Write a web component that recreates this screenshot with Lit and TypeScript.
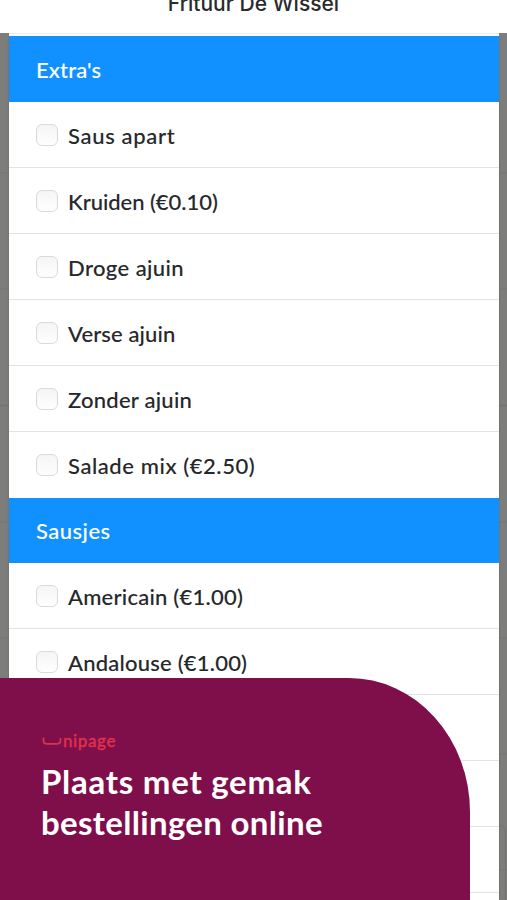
import { LitElement, html, css } from "lit";
import { customElement, property } from "lit/decorators.js";

interface Option { label: string; spacing: number }
interface Group { title: string; spacing: number; height: number; options: Option[] }

const groups: Group[] = [
  {
    title: "Extra's", spacing: 0.13, height: 66,
    options: [
      { label: "Saus apart", spacing: 0.68 },
      { label: "Kruiden (€0.10)", spacing: -0.04 },
      { label: "Droge ajuin", spacing: 0.42 },
      { label: "Verse ajuin", spacing: 0.12 },
      { label: "Zonder ajuin", spacing: 0.25 },
      { label: "Salade mix (€2.50)", spacing: 0.58 },
    ],
  },
  {
    title: "Sausjes", spacing: 0.48, height: 65,
    options: [
      { label: "Americain (€1.00)", spacing: 0.24 },
      { label: "Andalouse (€1.00)", spacing: 0.22 },
      { label: "", spacing: 0 },
      { label: "", spacing: 0 },
      { label: "", spacing: 0 },
      { label: "", spacing: 0 },
    ],
  },
];

@customElement("option-group")
class OptionGroup extends LitElement {
  @property({ attribute: false }) group!: Group;

  static styles = css`
    :host { display: block; }
    .head {
      box-sizing: border-box; padding: 1px 27px 0;
      display: flex; align-items: center;
      background: #1190ff; color: #fff; font-size: 22px; line-height: 26px; font-weight: 500;
      -webkit-text-stroke: 0.1px #fff;
    }
    .row {
      height: 66px; box-sizing: border-box; padding: 0 27px;
      display: flex; align-items: center; gap: 10px;
      border-bottom: 1px solid #e2e3e4; background: #fff;
    }
    .row:last-child { border-bottom-color: #fff; }
    .box {
      width: 22px; height: 22px; box-sizing: border-box; flex: none;
      border: 1.5px solid #d9dadb; border-radius: 6px;
      background: linear-gradient(#f5f5f5, #fefefe);
    }
    .label {
      font-size: 22px; line-height: 26px; font-weight: 500; color: #25282b;
      -webkit-text-stroke: 0.1px #25282b; white-space: nowrap; padding-top: 3px;
    }
  `;

  render() {
    return html`
      <div class="head" style="height:${this.group.height}px">
        <span style="letter-spacing:${this.group.spacing}px">${this.group.title}</span>
      </div>
      ${this.group.options.map((o) => html`
        <div class="row">
          <span class="box"></span>
          <span class="label" style="letter-spacing:${o.spacing}px">${o.label}</span>
        </div>`)}
    `;
  }
}

@customElement("app-root")
class AppRoot extends LitElement {
  static styles = css`
    :host {
      display: block; position: relative; width: 507px; height: 900px; overflow: hidden;
      background: repeating-linear-gradient(#7d7d7c 0 115px, #757575 115px 116.2px) 0 57.5px;
      background-color: #7d7d7c;
      font-family: Lato, "Open Sans", sans-serif;
    }
    .top { height: 33px; background: #fff; display: flex; justify-content: center; }
    .title {
      font-family: Inter, Roboto, sans-serif; font-size: 21px; font-weight: 500; line-height: 26px;
      color: #2a2a2c; margin-top: -9px; white-space: nowrap; height: 26px;
    }
    .sheet {
      position: relative;
      margin: 0 8px 0 9px; border-top: 1px solid #eceaea; padding-top: 2px; background: #fff;
      box-shadow: 0 3px 2px rgba(0, 0, 0, 0.2);
    }
    .card {
      position: absolute; left: 490px; top: 825px; width: 16px; height: 90px; box-sizing: border-box;
      border: 1px solid #727272; border-radius: 6px;
    }
    .promo {
      position: absolute; left: 0; bottom: 0; width: 470px; height: 222px; box-sizing: border-box;
      background: #7f0f4b; border-top-right-radius: 121px 134px; padding: 53px 0 0 41px;
    }
    .brand { display: flex; height: 20px; align-items: center; color: #e0314b; gap: 1px; margin-left: 1px; }
    .mark { margin-top: 2px; }
    .brand-name { font-size: 17px; font-weight: 500; line-height: 20px; letter-spacing: 0.6px; -webkit-text-stroke: 0.3px #e0314b; }
    .headline { margin: 10px 0 0; color: #fff; font-size: 33px; line-height: 41px; font-weight: 700; }
    .line { display: block; white-space: nowrap; }
    .first { letter-spacing: 0.74px; }
    .second { letter-spacing: 0.32px; }
  `;

  render() {
    return html`
      <div class="card"></div>
      <div class="top"><div class="title">Frituur De Wissel</div></div>
      <div class="sheet">${groups.map((g) => html`<option-group .group=${g}></option-group>`)}</div>
      <div class="promo">
        <div class="brand">
          <svg class="mark" width="20" height="10" viewBox="0 0 20 10" fill="none" stroke="currentColor" stroke-width="1.7" stroke-linecap="round">
            <path d="M1.5 1v2.8q0 3 3 3h11q3 0 3-3v-2.2" />
          </svg>
          <span class="brand-name">nipage</span>
        </div>
        <h1 class="headline"><span class="line first">Plaats met gemak</span><span class="line second">bestellingen online</span></h1>
      </div>
    `;
  }
}
